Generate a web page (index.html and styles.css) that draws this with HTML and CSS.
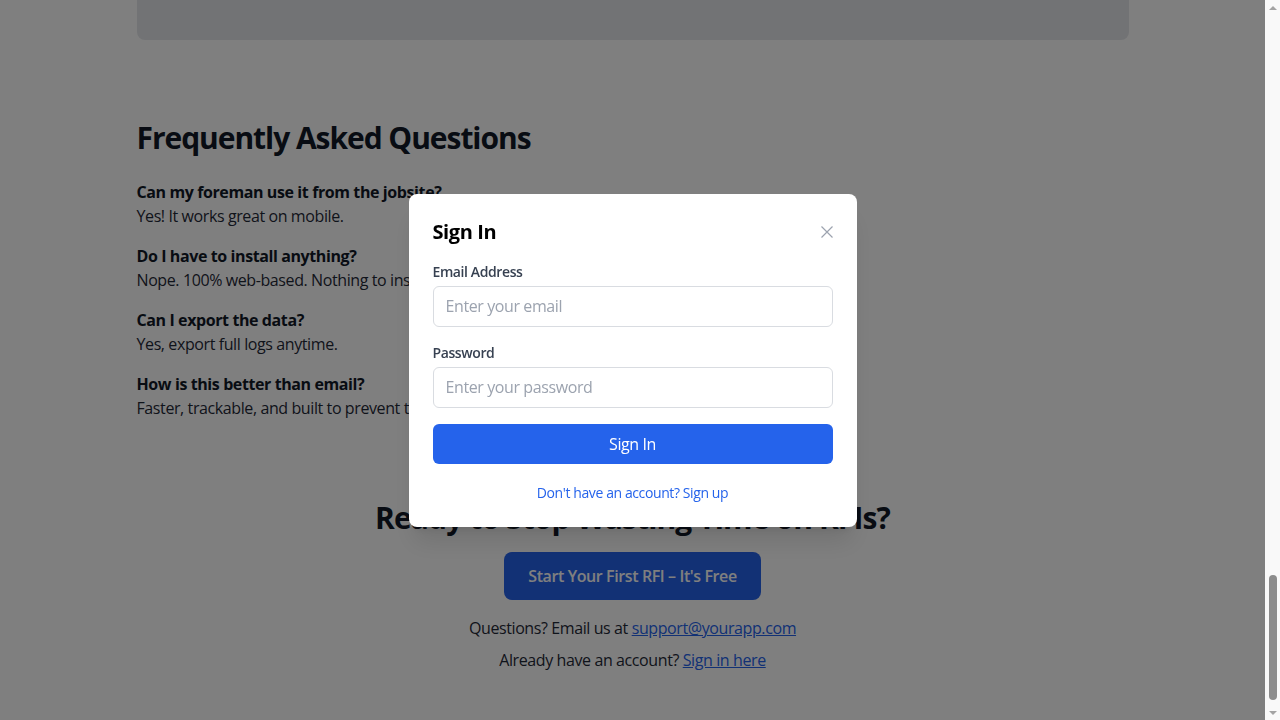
FILE: index.html
```html
<!DOCTYPE html>
<html lang="en">
<head>
<meta charset="utf-8">
<title>RFI Tracker</title>
<link rel="stylesheet" href="styles.css">
</head>
<body>
<header class="nav">
  <div class="container nav-inner">
    <span class="brand">RFI Tracker</span>
    <nav class="nav-links"><a href="#">Features</a><a href="#">Pricing</a><a href="#">FAQ</a><a href="#">Sign In</a></nav>
  </div>
</header>
<main>
  <section class="hero">
    <div class="container hero-inner">
      <h1 class="hero-title">Track Every RFI. Miss Nothing.</h1>
      <p class="hero-sub">The simplest way for contractors to send, track and close out RFIs — from the office or the jobsite.</p>
      <a class="btn-primary" href="#">Start Your First RFI – It's Free</a>
    </div>
  </section>
  <section class="features">
    <div class="container">
      <h2 class="section-title">Everything You Need, Nothing You Don't</h2>
      <div class="feature-grid">
        <div class="feature"><h3>Instant RFIs</h3><p>Create and send an RFI in under a minute.</p></div>
        <div class="feature"><h3>Status Tracking</h3><p>See what's open, answered and overdue at a glance.</p></div>
        <div class="feature"><h3>Attachments</h3><p>Add photos, drawings and documents to any RFI.</p></div>
        <div class="feature"><h3>Reminders</h3><p>Automatic follow-ups so nothing slips.</p></div>
      </div>
    </div>
  </section>
  <section class="steps">
    <div class="container">
      <h2 class="section-title">How It Works</h2>
      <ol class="step-list">
        <li>Create a project and invite your team.</li>
        <li>Submit RFIs with photos and drawings.</li>
        <li>Track responses and export the log.</li>
      </ol>
    </div>
  </section>
  <section class="testimonials">
    <div class="container">
      <h2 class="section-title">What Contractors Say</h2>
      <blockquote class="quote">"We closed out our RFIs twice as fast on our last job."</blockquote>
    </div>
  </section>
  <section class="compare">
    <div class="container">
      <h2 class="section-title">Why Not Just Use Email?</h2>
      <div class="card">
        <p class="card-text">Email threads get buried. Attachments get lost. Nobody knows who owes an answer.</p>
        <p class="card-note">Built for the job, every RFI is logged, tracked and closed on time.</p>
      </div>
    </div>
  </section>
  <section class="faq">
    <div class="container">
      <h2 class="faq-title">Frequently Asked Questions</h2>
      <div class="faq-list">
        <div class="faq-item"><p class="faq-q">Can my foreman use it from the jobsite?</p><p class="faq-a">Yes! It works great on mobile.</p></div>
        <div class="faq-item"><p class="faq-q">Do I have to install anything?</p><p class="faq-a">Nope. 100% web-based. Nothing to install.</p></div>
        <div class="faq-item"><p class="faq-q">Can I export the data?</p><p class="faq-a">Yes, export full logs anytime.</p></div>
        <div class="faq-item"><p class="faq-q">How is this better than email?</p><p class="faq-a">Faster, trackable, and built to prevent things from slipping through the cracks.</p></div>
      </div>
    </div>
  </section>
  <section class="cta">
    <div class="container cta-inner">
      <h2 class="cta-title">Ready to Stop Wasting Time on RFIs?</h2>
      <a class="btn-primary" href="#">Start Your First RFI – It's Free</a>
      <p class="cta-line cta-first">Questions? Email us at <a class="link" href="#">support@yourapp.com</a></p>
      <p class="cta-line">Already have an account? <a class="link" href="#">Sign in here</a></p>
    </div>
  </section>
</main>
<div class="overlay">
  <div class="modal">
    <div class="modal-head">
      <h2 class="modal-title">Sign In</h2>
      <button class="close" type="button" aria-label="Close">
        <svg width="12" height="12" viewBox="0 0 12 12"><path d="M0.5 0.5L11.5 11.5M11.5 0.5L0.5 11.5" stroke="#9ca3af" stroke-width="1.2" fill="none"/></svg>
      </button>
    </div>
    <form class="form">
      <div class="field">
        <label class="label" for="email">Email Address</label>
        <input class="input" id="email" type="email" placeholder="Enter your email">
      </div>
      <div class="field">
        <label class="label" for="pw">Password</label>
        <input class="input" id="pw" type="password" placeholder="Enter your password">
      </div>
      <button class="submit" type="button">Sign In</button>
    </form>
    <p class="switch"><a href="#">Don't have an account? Sign up</a></p>
  </div>
</div>
<div class="scrollbar" aria-hidden="true">
  <span class="sb-btn"><span class="sb-up"></span></span>
  <span class="sb-track"><span class="sb-thumb"></span></span>
  <span class="sb-btn"><span class="sb-down"></span></span>
</div>
<script src="script.js"></script>
</body>
</html>
```

FILE: styles.css
```css
* { box-sizing: border-box; }
html, body { margin: 0; padding: 0; }
body {
  font-family: "Open Sans", "Noto Sans", Arial, sans-serif;
  letter-spacing: -0.025em;
  color: #111827;
  background: #ffffff;
  font-size: 16px;
  line-height: 24px;
  margin-right: 15px;
}
p, h1, h2, h3, ol, blockquote { margin: 0; }
.container { max-width: 1024px; margin: 0 auto; padding: 0 16px; }

.nav { height: 64px; border-bottom: 1px solid #e5e7eb; }
.nav-inner { display: flex; align-items: center; justify-content: space-between; height: 64px; }
.brand { font-weight: 700; font-size: 20px; }
.nav-links { display: flex; gap: 24px; }
.nav-links a { color: #374151; text-decoration: none; }

.hero { min-height: 636px; display: flex; align-items: center; background: #f9fafb; }
.hero-inner { display: flex; flex-direction: column; align-items: center; gap: 24px; text-align: center; }
.hero-title { font-size: 48px; line-height: 56px; font-weight: 800; }
.hero-sub { font-size: 20px; line-height: 28px; color: #4b5563; max-width: 640px; }

.section-title { font-size: 30px; line-height: 36px; font-weight: 700; margin-bottom: 32px; }
.features { min-height: 800px; padding: 80px 0; }
.feature-grid { display: grid; grid-template-columns: repeat(2, 1fr); gap: 24px; }
.feature { border: 1px solid #e5e7eb; border-radius: 8px; padding: 24px; }
.feature h3 { font-size: 20px; line-height: 28px; margin-bottom: 8px; }
.steps { min-height: 700px; padding: 80px 0; background: #f9fafb; }
.step-list { display: flex; flex-direction: column; gap: 16px; padding-left: 20px; }
.testimonials { min-height: 600px; padding: 80px 0; }
.quote { font-size: 20px; line-height: 28px; font-style: italic; color: #374151; }

.compare { padding: 64px 0 40px; }
.card {
  background: #e5e7eb;
  border-radius: 8px;
  padding: 32px 32px 40px;
  display: flex;
  flex-direction: column;
  gap: 16px;
  min-height: 338px;
  justify-content: flex-end;
}
.card-text { font-size: 18px; line-height: 28px; color: #374151; }
.card-note { color: #1f2937; padding-left: 150px; }

.faq { padding: 40px 0; }
.faq-title { font-size: 30px; line-height: 36px; font-weight: 700; letter-spacing: -0.035em; margin-bottom: 24px; }
.faq-list { display: flex; flex-direction: column; gap: 16px; }
.faq-q { font-weight: 700; color: #111827; }
.faq-a { color: #1f2937; }

.cta { padding: 40px 0 48px; }
.cta-inner { display: flex; flex-direction: column; align-items: center; text-align: center; }
.cta-title { font-size: 30px; line-height: 36px; font-weight: 700; letter-spacing: -0.029em; margin-bottom: 16px; }
.btn-primary {
  display: inline-block;
  background: #2563eb;
  color: #ffffff;
  font-weight: 600;
  padding: 12px 24px;
  border-radius: 8px;
  text-decoration: none;
}
.cta-line { color: #1f2937; margin-top: 8px; }
.cta-first { margin-top: 16px; }
.link { color: #2563eb; text-decoration: underline; }

.overlay {
  position: fixed;
  top: 0;
  left: 0;
  bottom: 0;
  right: 15px;
  background: rgba(0, 0, 0, 0.5);
  display: flex;
  align-items: center;
  justify-content: center;
  padding: 16px;
}
.modal {
  width: 100%;
  max-width: 448px;
  background: #ffffff;
  border-radius: 8px;
  padding: 24px;
  box-shadow: 0 20px 25px -5px rgba(0, 0, 0, 0.1), 0 8px 10px -6px rgba(0, 0, 0, 0.1);
}
.modal-head { display: flex; align-items: center; justify-content: space-between; margin-bottom: 16px; }
.modal-title { font-size: 20px; line-height: 28px; font-weight: 700; color: #000000; }
.close { border: 0; background: none; padding: 0; display: flex; cursor: pointer; }
.form { display: flex; flex-direction: column; gap: 16px; }
.field { display: flex; flex-direction: column; }
.label { font-size: 14px; line-height: 20px; font-weight: 600; color: #374151; margin-bottom: 4px; }
.input {
  font: inherit;
  letter-spacing: inherit;
  font-size: 16px;
  line-height: 23px;
  padding: 8px 12px;
  border: 1px solid #d9dce1;
  border-radius: 6px;
  color: #111827;
  width: 100%;
  outline: none;
}
.input::placeholder { color: #9ca3af; }
.submit {
  font: inherit;
  letter-spacing: inherit;
  font-size: 16px;
  line-height: 24px;
  background: #2563eb;
  color: #ffffff;
  border: 0;
  border-radius: 6px;
  padding: 8px 16px;
  width: 100%;
  cursor: pointer;
}
.switch { margin-top: 19px; text-align: center; font-size: 14px; line-height: 20px; }
.switch a { color: #2563eb; text-decoration: none; }

.scrollbar {
  position: fixed;
  top: 0;
  right: 0;
  bottom: 0;
  width: 15px;
  background: #f9f9f9;
  display: flex;
  flex-direction: column;
}
.sb-btn { height: 15px; display: flex; align-items: center; justify-content: center; }
.sb-up { width: 0; height: 0; border-left: 4px solid transparent; border-right: 4px solid transparent; border-bottom: 4px solid #a3a3a3; }
.sb-down { width: 0; height: 0; border-left: 4px solid transparent; border-right: 4px solid transparent; border-top: 4px solid #a3a3a3; }
.sb-track { flex: 1; display: flex; flex-direction: column; justify-content: flex-end; align-items: center; padding-bottom: 5px; }
.sb-thumb { width: 8px; height: 125px; border-radius: 4px; background: #8c8c8c; }
```

FILE: script.js
```js
window.scrollTo(0, document.documentElement.scrollHeight);
window.addEventListener('load', function () {
  window.scrollTo(0, document.documentElement.scrollHeight);
});
```
